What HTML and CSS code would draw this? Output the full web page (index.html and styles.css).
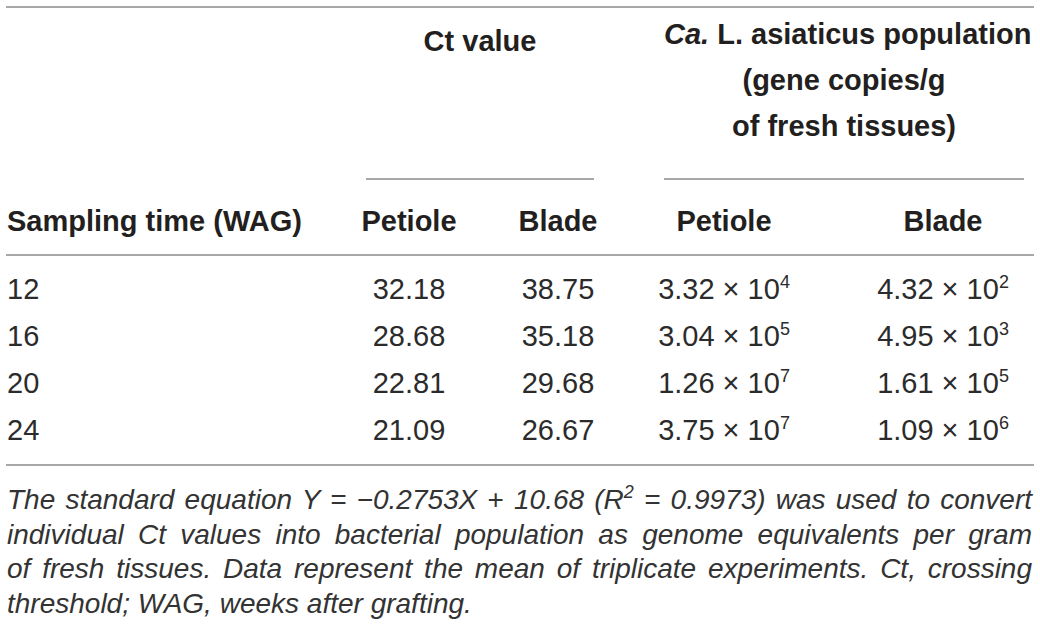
FILE: index.html
```html
<!DOCTYPE html>
<html lang="en">
<head>
  <meta charset="UTF-8" />
  <title>Ct values and Ca. L. asiaticus population</title>
  <link rel="stylesheet" href="styles.css">
</head>
<body>
<table class="data">
  <colgroup>
    <col class="w-time" />
    <col class="w-ct" />
    <col class="w-ct2" />
    <col class="w-pop" />
    <col class="w-pop2" />
  </colgroup>
  <thead>
    <tr class="grp">
      <th></th>
      <th colspan="2"><div class="sub ct">Ct value</div></th>
      <th colspan="2">
        <div class="sub pop">
          <i>Ca.</i> L. asiaticus population<br />
          (gene copies/g<br />
          of fresh tissues)
        </div>
      </th>
    </tr>
    <tr class="cols">
      <th class="first">Sampling time (WAG)</th>
      <th>Petiole</th>
      <th>Blade</th>
      <th>Petiole</th>
      <th class="last">Blade</th>
    </tr>
  </thead>
  <tbody>
    <tr>
      <td class="first">12</td>
      <td>32.18</td>
      <td>38.75</td>
      <td>3.32 &times; 10<sup>4</sup></td>
      <td class="last">4.32 &times; 10<sup>2</sup></td>
    </tr>
    <tr>
      <td class="first">16</td>
      <td>28.68</td>
      <td>35.18</td>
      <td>3.04 &times; 10<sup>5</sup></td>
      <td class="last">4.95 &times; 10<sup>3</sup></td>
    </tr>
    <tr>
      <td class="first">20</td>
      <td>22.81</td>
      <td>29.68</td>
      <td>1.26 &times; 10<sup>7</sup></td>
      <td class="last">1.61 &times; 10<sup>5</sup></td>
    </tr>
    <tr>
      <td class="first">24</td>
      <td>21.09</td>
      <td>26.67</td>
      <td>3.75 &times; 10<sup>7</sup></td>
      <td class="last">1.09 &times; 10<sup>6</sup></td>
    </tr>
  </tbody>
</table>
<div class="note">
  <span class="ln">The standard equation Y = &minus;0.2753X <span class="op">+</span> 10.68 (R<sup>2</sup> = 0.9973) was used to convert</span>
  <span class="ln">individual Ct values into bacterial population as genome equivalents per gram</span>
  <span class="ln">of fresh tissues. Data represent the mean of triplicate experiments. Ct, crossing</span>
  <span class="ln end">threshold; WAG, weeks after grafting.</span>
</div>
</body>
</html>
```

FILE: styles.css
```css
body {
  margin: 0;
  background-color: #fff;
  color: #231f20;
  font-family: "Liberation Sans", Arial, sans-serif;
  font-size: 29px;
}
.data {
  border-collapse: collapse;
  width: 1028px;
  margin: 6px 0 0 6px;
  border-top: 2px solid #a8a8a8;
  border-bottom: 2px solid #a8a8a8;
  table-layout: fixed;
}
.w-time {
  width: 332px;
}
.w-ct {
  width: 142px;
}
.w-ct2 {
  width: 156px;
}
.w-pop {
  width: 176px;
}
.w-pop2 {
  width: 222px;
}
th,
td {
  padding: 0;
  text-align: center;
  white-space: nowrap;
}
th {
  font-weight: 700;
  line-height: 46px;
  vertical-align: top;
}
.grp th {
  height: 172px;
}
.sub {
  box-sizing: border-box;
  height: 172px;
  border-bottom: 2px solid #a8a8a8;
}
.sub.ct {
  margin: 0 42px 0 28px;
  padding-top: 10px;
}
.sub.pop {
  margin: 0 10px 0 28px;
  padding-top: 3px;
}
.sub i {
  font-style: italic;
}
.cols th {
  padding: 18px 0 10px;
  border-bottom: 2px solid #a8a8a8;
}
.first {
  text-align: left;
  padding-left: 1px;
}
th.first {
  padding-left: 1px;
}
.last {
  padding-left: 40px;
}
.cols th.last {
  padding-left: 40px;
}
td {
  line-height: 47px;
  color: #2b2b2b;
}
tbody tr:first-child td {
  padding-top: 10px;
}
tbody tr:last-child td {
  padding-bottom: 10px;
}
sup {
  font-size: 18px;
  line-height: 0;
  vertical-align: 11px;
}
.note {
  width: 1025px;
  margin: 17px 0 0 7px;
  font-size: 28px;
  font-style: italic;
  line-height: 34.5px;
  color: #333;
}
.ln {
  display: block;
  text-align: justify;
  text-align-last: justify;
}
.ln.end {
  text-align: left;
  text-align-last: left;
}
.op {
  font-style: normal;
}
```
